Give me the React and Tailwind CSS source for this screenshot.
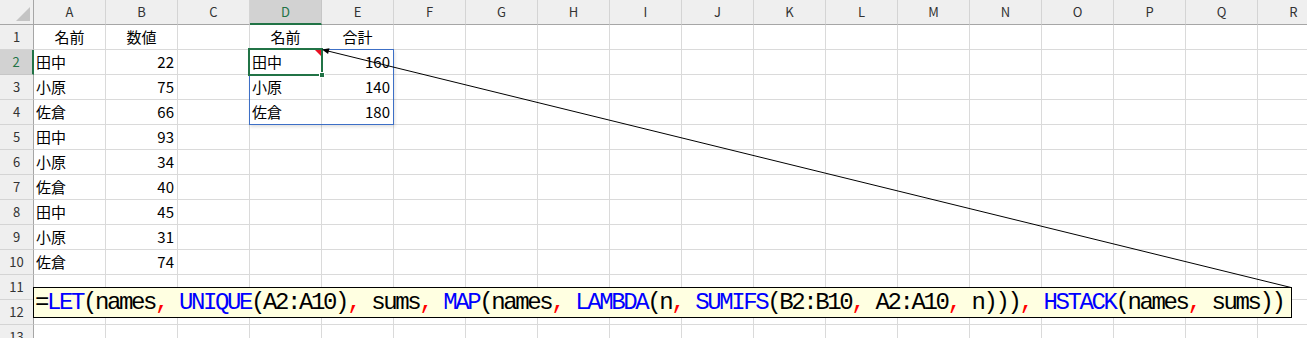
import React from 'react'

const COLS = ['A', 'B', 'C', 'D', 'E', 'F', 'G', 'H', 'I', 'J', 'K', 'L', 'M', 'N', 'O', 'P', 'Q', 'R']

// cell contents: [text, align]
const data = {
  1: { A: ['名前', 'c'], B: ['数値', 'c'], D: ['名前', 'c'], E: ['合計', 'c'] },
  2: { A: ['田中', 'l'], B: ['22', 'r'], D: ['田中', 'l'], E: ['160', 'r'] },
  3: { A: ['小原', 'l'], B: ['75', 'r'], D: ['小原', 'l'], E: ['140', 'r'] },
  4: { A: ['佐倉', 'l'], B: ['66', 'r'], D: ['佐倉', 'l'], E: ['180', 'r'] },
  5: { A: ['田中', 'l'], B: ['93', 'r'] },
  6: { A: ['小原', 'l'], B: ['34', 'r'] },
  7: { A: ['佐倉', 'l'], B: ['40', 'r'] },
  8: { A: ['田中', 'l'], B: ['45', 'r'] },
  9: { A: ['小原', 'l'], B: ['31', 'r'] },
  10: { A: ['佐倉', 'l'], B: ['74', 'r'] },
}

const rows = [1, 2, 3, 4, 5, 6, 7, 8, 9, 10, 11, 12, 13]

// formula tokens: [text, kind]  f = function, c = comma, t = plain
const formula = [
  ['=', 't'], ['LET', 'f'], ['(names', 't'], [',', 'c'], [' ', 't'],
  ['UNIQUE', 'f'], ['(A2:A10)', 't'], [',', 'c'], [' sums', 't'], [',', 'c'], [' ', 't'],
  ['MAP', 'f'], ['(names', 't'], [',', 'c'], [' ', 't'],
  ['LAMBDA', 'f'], ['(n', 't'], [',', 'c'], [' ', 't'],
  ['SUMIFS', 'f'], ['(B2:B10', 't'], [',', 'c'], [' A2:A10', 't'], [',', 'c'], [' n)))', 't'], [',', 'c'], [' ', 't'],
  ['HSTACK', 'f'], ['(names', 't'], [',', 'c'], [' sums))', 't'],
]

const tokenClass = {
  f: 'text-[#0000ff]',
  c: 'text-[#ff0000]',
  t: 'text-black',
}

function ColHeader({ col }) {
  const active = col === 'D'
  return (
    <div
      className={
        active
          ? 'flex items-center justify-center bg-[#d2d2d2] border-r border-[#c6c6c6] border-b-2 border-b-[#217346] text-[13px] text-[#217346]'
          : 'flex items-center justify-center bg-[#efefef] border-r border-[#d4d4d4] border-b border-b-[#a6a6a6] text-[13px] text-[#333]'
      }
    >
      {col}
    </div>
  )
}

function RowHeader({ row }) {
  const active = row === 2
  return (
    <div
      className={
        active
          ? 'flex items-center justify-center bg-[#d2d2d2] border-b border-[#c6c6c6] border-r-2 border-r-[#217346] text-[13px] text-[#217346]'
          : 'flex items-center justify-center bg-[#efefef] border-b border-[#d4d4d4] border-r border-r-[#a6a6a6] text-[13px] text-[#333]'
      }
    >
      {row}
    </div>
  )
}

function Cell({ value }) {
  let align = 'justify-start pl-[2px]'
  if (value && value[1] === 'r') align = 'justify-end pr-[3px]'
  if (value && value[1] === 'c') align = 'justify-center'
  return (
    <div className={`flex items-center ${align} border-r border-b border-[#dadada] text-[15px] text-black whitespace-nowrap`}>
      {value ? value[0] : null}
    </div>
  )
}

export default function App() {
  return (
    <div
      className="relative w-[1307px] h-[338px] overflow-hidden bg-white"
      style={{ fontFamily: '"Noto Sans CJK JP", "Liberation Sans", sans-serif' }}
    >
      <div className="grid grid-cols-[34px_repeat(18,72px)] auto-rows-[25px] w-max">
        {/* corner */}
        <div className="relative bg-[#efefef] border-r border-[#a6a6a6] border-b border-b-[#a6a6a6]">
          <svg className="absolute left-0 top-0" width="33" height="24">
            <polygon points="30,7 30,21 16,21" fill="#c4c4c4" />
          </svg>
        </div>
        {COLS.map(c => (
          <ColHeader key={c} col={c} />
        ))}

        {rows.map(r => (
          <React.Fragment key={r}>
            <RowHeader row={r} />
            {COLS.map(c => (
              <Cell key={c} value={data[r] && data[r][c]} />
            ))}
          </React.Fragment>
        ))}
      </div>

      {/* spill range */}
      <div className="absolute left-[249px] top-[49px] w-[145px] h-[76px] border border-[#3d6fc6] shadow-[1px_2px_3px_rgba(0,0,0,0.12)]"></div>

      {/* active cell D2 */}
      <div className="absolute left-[248px] top-[48px] w-[75px] h-[28px] border-2 border-[#217346]"></div>
      <div className="absolute left-[319px] top-[72px] w-[6px] h-[6px] bg-[#217346] border border-white"></div>

      {/* comment indicator */}
      <svg className="absolute left-[315px] top-[50px]" width="6" height="6">
        <polygon points="0,0 6,0 6,6" fill="#e81123" />
      </svg>

      {/* callout arrow */}
      <svg className="absolute left-0 top-0 pointer-events-none" width="1307" height="338">
        <line x1="1291" y1="287.5" x2="327" y2="50.8" stroke="#000" strokeWidth="1" />
        <polygon points="322,49.5 328.1,54.1 329.5,48.3" fill="#000" />
      </svg>

      {/* comment box */}
      <div
        className="absolute left-[33px] top-[287px] w-[1259px] h-[31px] bg-[#ffffe1] border border-black flex items-center pl-[1px] text-[24px] tracking-[-2.4px] leading-none whitespace-pre"
        style={{ fontFamily: '"Liberation Mono", monospace' }}
      >
        {formula.map((t, i) => (
          <span key={i} className={tokenClass[t[1]]}>
            {t[0]}
          </span>
        ))}
      </div>
    </div>
  )
}
